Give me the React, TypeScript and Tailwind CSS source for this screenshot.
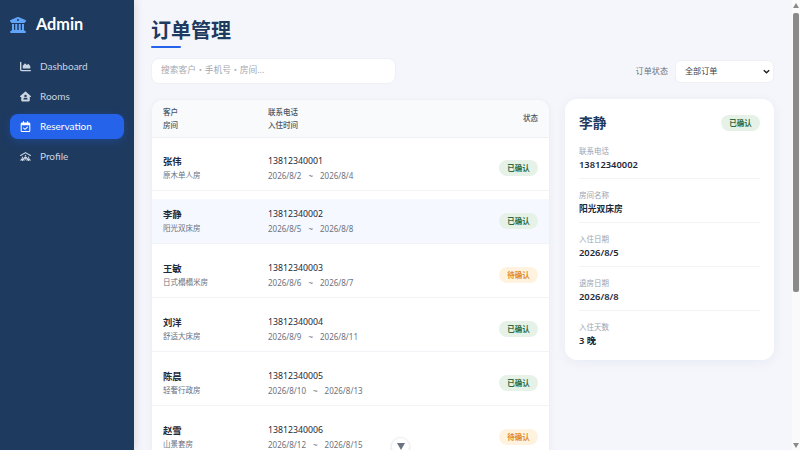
import { FaChartArea, FaHouseUser, FaRegCalendarCheck, FaPeopleRoof, FaBuildingColumns } from "react-icons/fa6";

const ORDERS = [
  { name: "张伟", room: "原木单人房", phone: "13812340001", from: "2026/8/2", to: "2026/8/4", status: "已确认", row: "h-[53px] pt-[8px]" },
  { name: "李静", room: "阳光双床房", phone: "13812340002", from: "2026/8/5", to: "2026/8/8", status: "已确认", row: "h-[52.5px] pt-[8px]", active: true },
  { name: "王敏", room: "日式榻榻米房", phone: "13812340003", from: "2026/8/6", to: "2026/8/7", status: "待确认", row: "h-[54px] pt-[10px]" },
  { name: "刘洋", room: "舒适大床房", phone: "13812340004", from: "2026/8/9", to: "2026/8/11", status: "已确认", row: "h-[54px] pt-[10px]" },
  { name: "陈晨", room: "轻奢行政房", phone: "13812340005", from: "2026/8/10", to: "2026/8/13", status: "已确认", row: "h-[54px] pt-[9px]" },
  { name: "赵雪", room: "山景套房", phone: "13812340006", from: "2026/8/12", to: "2026/8/15", status: "待确认", row: "h-[54px] pt-[9px]" },
];

const NAV = [
  { label: "Dashboard", icon: FaChartArea },
  { label: "Rooms", icon: FaHouseUser },
  { label: "Reservation", icon: FaRegCalendarCheck, active: true },
  { label: "Profile", icon: FaPeopleRoof },
];

const DETAILS = [
  { label: "联系电话", value: "13812340002", size: "text-[9.375px]" },
  { label: "房间名称", value: "阳光双床房", size: "text-[8.75px]" },
  { label: "入住日期", value: "2026/8/5", size: "text-[9.375px]" },
  { label: "退房日期", value: "2026/8/8", size: "text-[9.375px]" },
  { label: "入住天数", value: "3 晚", size: "text-[9.375px]" },
];

function Badge({ status }: { status: string }) {
  const ok = status === "已确认";
  return (
    <span className={`inline-block h-4 w-[39px] rounded-full text-center text-[7.5px] leading-4 font-semibold ${ok ? "bg-[#e6f2e8] text-[#2e6b3e]" : "bg-[#fff3e0] text-[#e08a1e]"}`}>
      {status}
    </span>
  );
}

export default function App() {
  return (
    <div className="relative flex h-[450px] w-[800px] overflow-hidden bg-[#f4f6fb] font-['Noto_Sans','Noto_Sans_CJK_SC',sans-serif]">
      {/* Sidebar */}
      <aside className="w-[134px] shrink-0 bg-[#1e3a5f] px-[10px] font-['Lato','Noto_Sans_CJK_SC',sans-serif] shadow-[2px_0_8px_rgba(0,0,0,0.1)]">
        <div className="flex h-[48px] items-center gap-[10px] pt-[1px]">
          <FaBuildingColumns className="h-4 w-4 text-[#60a5fa]" />
          <span className="text-[16.25px] font-bold text-white">Admin</span>
        </div>
        <nav className="mt-[6px] flex flex-col gap-[5px]">
          {NAV.map((n) => (
            <div key={n.label} className={`flex h-[25px] items-center gap-[10px] rounded-lg pl-[10px] text-[10px] ${n.active ? "bg-[#2563eb] text-white shadow-[0_2px_8px_rgba(37,99,235,0.3)]" : "text-[#cbd5e1]"}`}>
              <n.icon className="h-[11px] w-[11px] shrink-0" />
              <span className="-ml-[1px]">{n.label}</span>
            </div>
          ))}
        </nav>
      </aside>

      {/* Main */}
      <main className="flex-1 pl-[17px] pr-[26px]">
        <div className="pt-[19px]">
          <h1 className="text-[20px] leading-[24px] font-bold text-[#1e3a5f]">订单管理</h1>
          <div className="mt-[3px] h-[2px] w-[30px] rounded-full bg-[#2563eb]" />
        </div>

        <div className="mt-[10px] flex items-center justify-between">
          <div className="flex h-[26px] w-[245px] items-center rounded-lg border border-[#eef0f4] bg-white pl-[9px] text-[8.75px] text-[#a3a8b0]">
            搜索客户・手机号・房间...
          </div>
          <div className="flex items-center gap-[7px]">
            <span className="text-[8.125px] text-[#6b7280]">订单状态</span>
            <div className="flex h-[23px] w-[99px] items-center justify-between rounded-md border border-[#eef0f4] bg-white pl-[9px] pr-[2px] text-[8.125px] text-[#374151]">
              全部订单
              <svg viewBox="0 0 10 10" className="h-[9px] w-[9px]" fill="none" stroke="#222" strokeWidth="1.6"><path d="M2 3.5 5 6.5 8 3.5" /></svg>
            </div>
          </div>
        </div>

        <div className="mt-[15px] flex items-start gap-[15px]">
          {/* List */}
          <section className="w-[399px] shrink-0 rounded-t-xl border border-[#eef0f4] bg-white shadow-[0_2px_8px_rgba(30,58,95,0.04)]">
            <div className="flex h-[38px] items-center justify-between rounded-t-xl border-b border-[#eef0f4] bg-[#f9fafc] px-[11px] text-[7.5px] leading-[13px] font-medium text-[#4b5563]">
              <div className="flex">
                <div className="w-[105px]">客户<br />房间</div>
                <div>联系电话<br />入住时间</div>
              </div>
              <span>状态</span>
            </div>
            {ORDERS.map((o) => (
              <div key={o.phone} className={`${o.row} border-b border-[#f1f3f6] last:border-b-0`}>
                <div className={`flex h-full items-center justify-between px-[11px] ${o.active ? "bg-[#f5f9ff]" : ""}`}>
                  <div className="flex pt-[1px]">
                    <div className="w-[105px]">
                      <div className="text-[9.375px] leading-[13px] font-semibold text-[#1f2937]">{o.name}</div>
                      <div className="mt-[1px] text-[7.5px] leading-[12px] text-[#6b7280]">{o.room}</div>
                    </div>
                    <div>
                      <div className="text-[8.75px] leading-[13px] text-[#1f2937]">{o.phone}</div>
                      <div className="mt-[2px] text-[8px] leading-[12px] text-[#6b7280]">
                        {o.from}<span className="mx-[7px]">~</span>{o.to}
                      </div>
                    </div>
                  </div>
                  <Badge status={o.status} />
                </div>
              </div>
            ))}
          </section>

          {/* Detail card */}
          <section className="h-[261px] w-[209px] shrink-0 rounded-xl bg-white px-[14px] pt-[13px] shadow-[0_2px_12px_rgba(30,58,95,0.06)]">
            <div className="flex items-center justify-between">
              <h2 className="text-[13.75px] leading-[22px] font-bold text-[#1e3a5f]">李静</h2>
              <Badge status="已确认" />
            </div>
            <div className="mt-[11px]">
              {DETAILS.map((d, i) => (
                <div key={d.label} className={`pb-[6px] ${i > 0 ? "pt-[10px]" : ""} ${i < DETAILS.length - 1 ? "border-b border-[#f1f3f6]" : ""}`}>
                  <div className="text-[7.5px] leading-[12px] text-[#9ca3af]">{d.label}</div>
                  <div className={`${d.size} mt-[1px] leading-[14px] font-semibold text-[#1f2937]`}>{d.value}</div>
                </div>
              ))}
            </div>
          </section>
        </div>
      </main>

      {/* Page scrollbar */}
      <div className="absolute top-0 right-0 flex h-full w-[8px] flex-col items-center bg-[#fafafa] pr-[1px]">
        <svg viewBox="0 0 6 5" className="mt-[3px] h-[5px] w-[6px] shrink-0"><path d="M3 0 6 5H0z" fill="#8a8a8a" /></svg>
        <div className="mt-[5px] h-[279px] w-[6px] rounded-[2px] bg-[#8a8a8a]" />
        <svg viewBox="0 0 6 5" className="mt-auto mb-[2px] h-[5px] w-[6px] shrink-0"><path d="M0 0H6L3 5z" fill="#8a8a8a" /></svg>
      </div>

      {/* Scroll-down hint */}
      <div className="absolute bottom-[-6px] left-[391px] flex h-[19px] w-[19px] items-center justify-center rounded-full border border-[#eef0f4] bg-white shadow-sm">
        <svg viewBox="0 0 8 7" className="h-[7px] w-[8px]"><path d="M0 0H8L4 7z" fill="#6b7280" /></svg>
      </div>
    </div>
  );
}
